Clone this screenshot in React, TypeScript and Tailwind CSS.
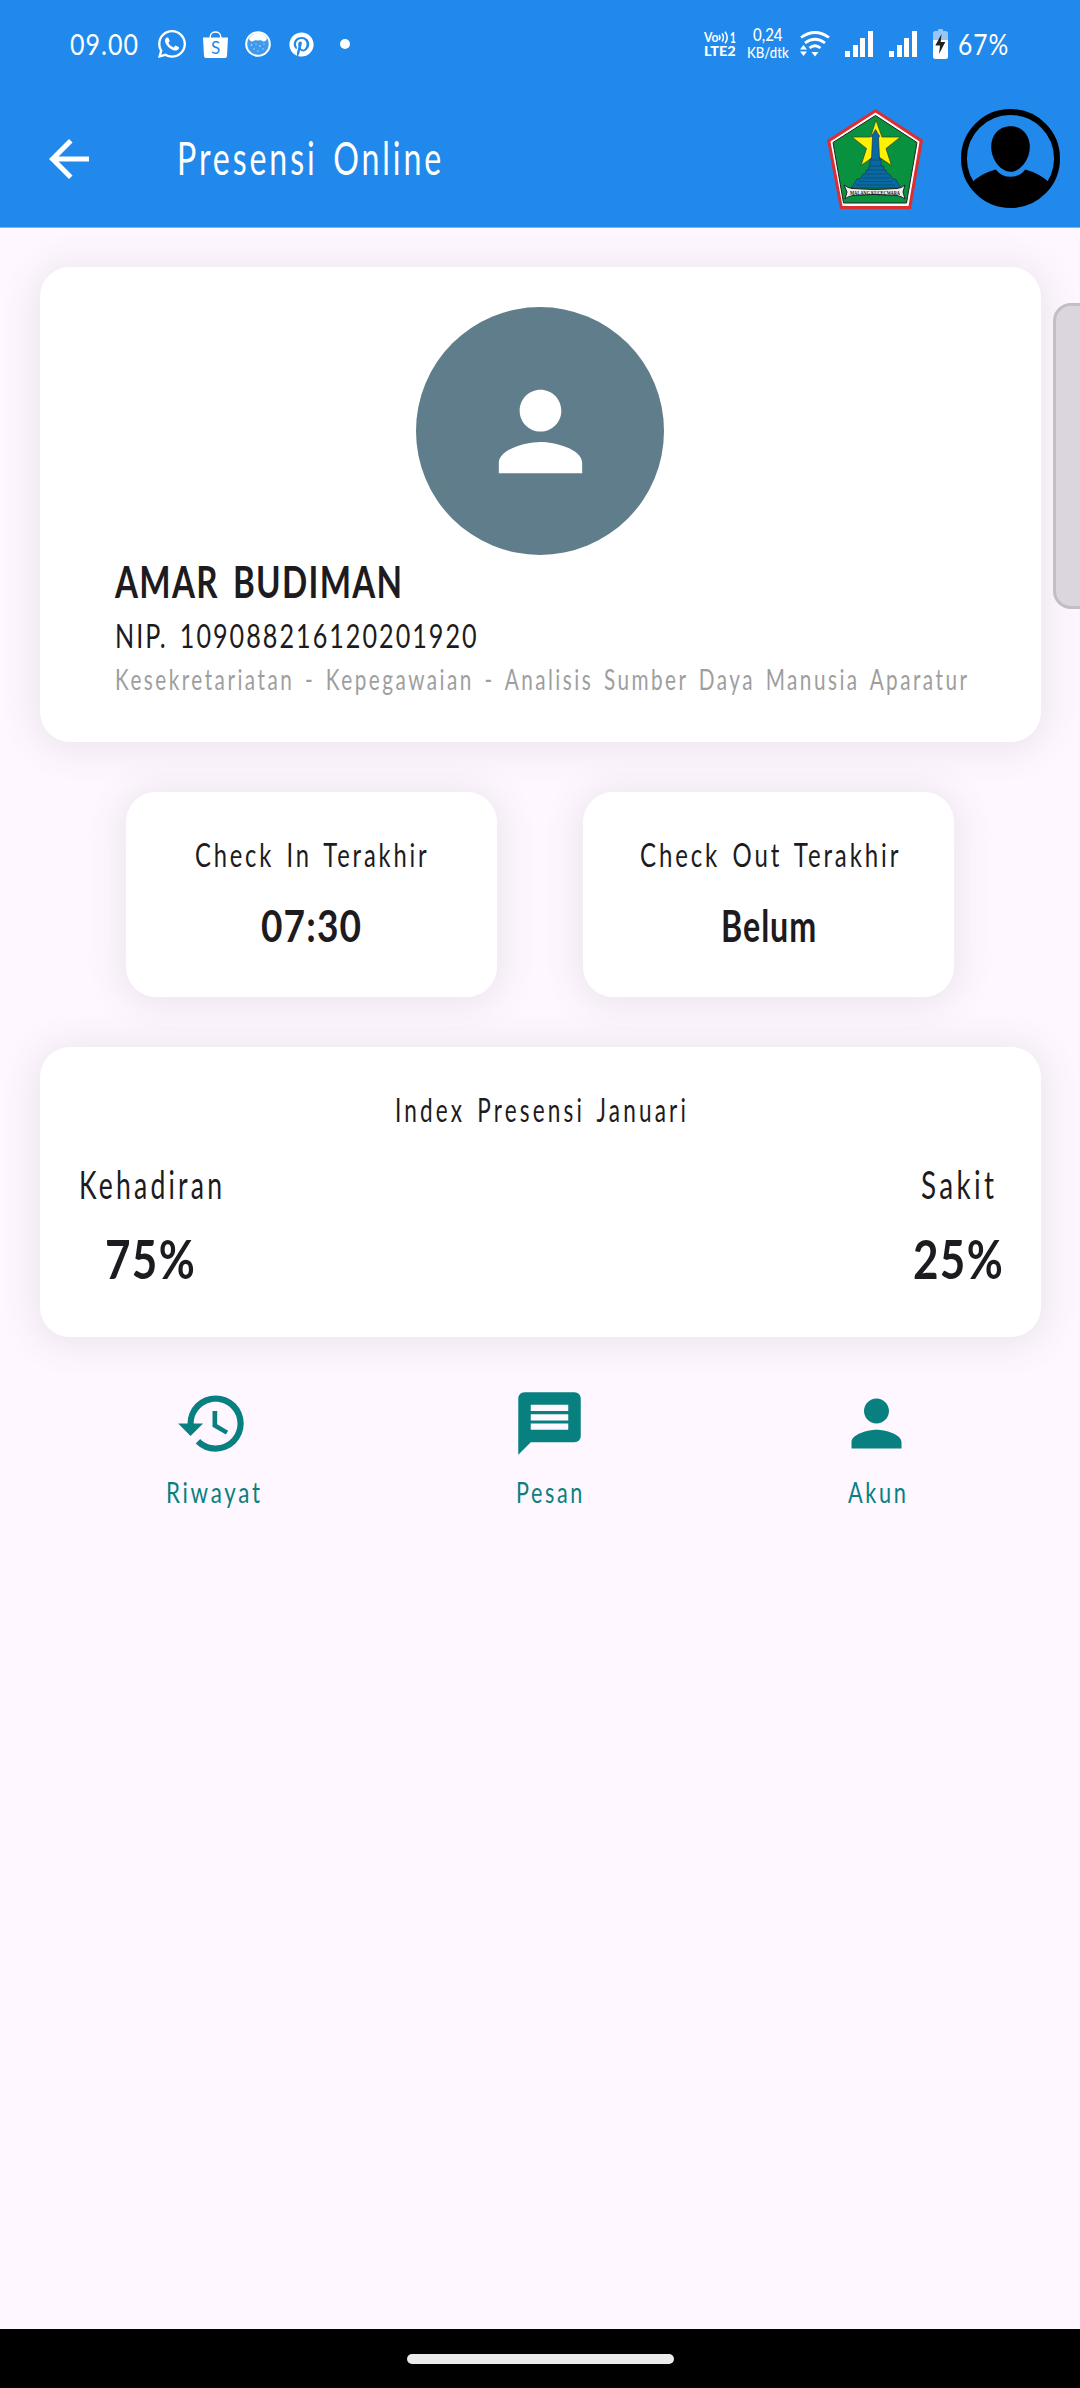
import { useLayoutEffect, useRef, useState } from 'react';
import { MdArrowBack, MdHistory, MdMessage, MdPerson } from 'react-icons/md';
import { FaWhatsapp, FaPinterest } from 'react-icons/fa';

// One line of condensed lettering, narrowed to the given width.
function Line({ text, width, className = '' }: { text: string; width: number; className?: string }) {
  const ref = useRef<HTMLSpanElement>(null);
  const [scale, setScale] = useState(0.7);
  useLayoutEffect(() => {
    const el = ref.current;
    if (!el) return;
    const trailing = parseFloat(getComputedStyle(el).letterSpacing) || 0;
    setScale(width / (el.offsetWidth - trailing));
  }, [text, width]);
  return (
    <span className={`block shrink-0 whitespace-nowrap [word-spacing:0.14em] ${className}`} style={{ width }}>
      <span ref={ref} className="inline-block origin-left" style={{ transform: `scaleX(${scale})` }}>
        {text}
      </span>
    </span>
  );
}

function SignalBars() {
  return (
    <div className="flex h-[26px] w-7 items-end justify-between">
      <div className="h-[6px] w-[5px] bg-white" />
      <div className="h-3 w-[5px] bg-white" />
      <div className="h-[19px] w-[5px] bg-white" />
      <div className="h-[26px] w-[5px] bg-white" />
    </div>
  );
}

function StatusBar() {
  return (
    <div className="flex h-[88px] items-center justify-between pr-[72px] pl-[70px] text-white">
      <div className="flex items-center">
        <Line text="09.00" width={68} className="text-[29px] leading-[40px] tracking-[0.04em]" />
        <FaWhatsapp className="ml-[18px] size-8" />
        <svg className="ml-[15px] h-[27px] w-[25px]" viewBox="0 0 25 27">
          <path d="M7.3 7V5.6C7.3 2.9 9.6 1 12.5 1s5.2 1.900 5.200 4.600V7" fill="none" stroke="#fff" strokeWidth="1.400" />
          <path d="M0 6.500h25l-1 18.500a2 2 0 0 1-2 2H3a2 2 0 0 1-2-2Z" fill="#fff" />
          <text x="12.500" y="22.500" textAnchor="middle" fontSize="17" fontFamily="Lato, sans-serif" fill="#2189eb">S</text>
        </svg>
        <svg className="ml-[17px] size-[26px]" viewBox="0 0 26 26">
          <circle cx="13" cy="13" r="11.800" fill="#4ba0ef" stroke="#fff" strokeWidth="2" />
          <circle cx="13" cy="13.500" r="9.800" fill="#3f99ee" />
          <path d="M4 7.500Q7 2 13 2t9 5.500q-1 3.500-4 3-1.200-2-5-1-3.800-1-5 1-3 .5-4-3Z" fill="#fff" />
          <g fill="#a5cff7">
            <circle cx="6.500" cy="14" r=".9" /><circle cx="11" cy="13" r=".7" /><circle cx="15" cy="15" r=".9" />
            <circle cx="19" cy="13" r=".7" /><circle cx="9" cy="18" r=".8" /><circle cx="13" cy="20" r=".8" /><circle cx="18" cy="18" r=".8" />
          </g>
        </svg>
        <FaPinterest className="ml-[18px] size-[25px]" />
        <div className="ml-[26px] size-[10px] rounded-full bg-white" />
      </div>

      <div className="flex items-center">
        <div className="flex w-8 flex-col">
          <div className="flex h-[13px] items-center">
            <Line text="Vo" width={14} className="text-[13px] leading-[13px] font-bold" />
            <svg className="h-[13px] w-[12px]" viewBox="0 0 12 13" fill="none" stroke="#fff" strokeWidth="1.500">
              <path d="M1 4q2 2.500 0 5M4 2.500q3 4 0 8M7 .7q4.500 5.800 0 11.600" />
            </svg>
            <Line text="1" width={6} className="text-[15px] leading-[13px] font-bold" />
          </div>
          <Line text="LTE2" width={32} className="text-[14px] leading-[14px] font-black" />
        </div>
        <div className="ml-[11px] flex w-[42px] flex-col items-center pb-px">
          <Line text="0,24" width={30} className="text-[16.500px] leading-[14px] font-medium" />
          <Line text="KB/dtk" width={42} className="mt-[3px] text-[16px] leading-[14px] font-medium" />
        </div>
        <svg className="ml-[11px] h-[26px] w-[30px]" viewBox="0 0 30 26" fill="none" stroke="#fff" strokeWidth="2.700">
          <path d="M1 6.500q14-10 28 0M5 12q10-7.500 20 0M9.500 17q5.500-4.500 11 0" />
          <path d="M11.500 21h7L15 25.500ZM0 18.500h7L3.500 14ZM0 20.500h7L3.500 25Z" fill="#fff" stroke="none" />
        </svg>
        <div className="ml-[15px]"><SignalBars /></div>
        <div className="ml-4"><SignalBars /></div>
        <svg className="ml-4 h-[30px] w-[15px]" viewBox="0 0 15 30">
          <path d="M2.500 2H5V.8q0-.8.8-.8h3.400q.8 0 .8.800V2h2.500Q15 2 15 4.500V11H0V4.500Q0 2 2.500 2Z" fill="#97c6f6" />
          <path d="M0 11h15v16.500q0 2.500-2.500 2.500h-10Q0 30 0 27.500Z" fill="#fff" />
          <path d="M8.500 5 2.300 16.500H7L6 25l6.300-12H7.700Z" fill="#222" />
        </svg>
        <Line text="67%" width={50} className="ml-[10px] text-[29px] leading-[40px] tracking-[0.04em]" />
      </div>
    </div>
  );
}

function CityCrest() {
  return (
    <svg className="h-[100px] w-[96px]" viewBox="0 0 96 100">
      <path d="M48.500 0 96 31 84 100H13L0 31Z" fill="#d92f31" />
      <path d="M48.500 3.500 92.500 32.500 81.500 97H15.500L3.500 32.500Z" fill="#fff" />
      <path d="M48.500 6.500 90 33.500 79.500 94H16.500L6 33.500Z" fill="#089240" stroke="#222" strokeWidth="1" />
      <path d="M49 11 55 28H73.500L59 39.500 64.500 56.500 49 46 34 56.500 39.500 39.500 25 28H43.500Z" fill="#fff200" stroke="#3b4a1b" strokeWidth=".8" />
      <path
        d="M48.500 20.500 50.500 24 52.500 27 51.500 29 52.500 50H54v7h2.500l.5 4h2l1.500 4h2l3 5h3l3 5 3 4H24l3-4 3-5h3l3-5h2l1.500-4h2l.5-4H43v-7h1.500L45.500 29 44.500 27 46.500 24Z"
        fill="#0869a3"
        stroke="#12384f"
        strokeWidth=".7"
      />
      <path d="M44 51h10M43 57h12M41 61h16M39 65h20M35 69h27M32 72.500h33M29 76h39" stroke="#11476a" strokeWidth=".8" />
      <path d="M17 76q4 3 8 3.500 23 2 45 0 5-.5 8-3.500l-2 7 2 7q-4-3-8-3.500-22-2-44 0-5 .5-8 3.500l2-7Z" fill="#eee" stroke="#222" strokeWidth="1" />
      <text x="48" y="86" textAnchor="middle" textLength="50" lengthAdjust="spacingAndGlyphs" fontSize="5.800" fontWeight="700" fontFamily="Liberation Serif, serif" fill="#111">MALANG KUÇEÇWARA</text>
    </svg>
  );
}

function ProfileBadge() {
  return (
    <svg className="size-[99px]" viewBox="0 0 100 100">
      <circle cx="50" cy="50" r="47" fill="none" stroke="#000" strokeWidth="6" />
      <path d="M50 17.500c12 0 19.500 9 19.500 21C69.500 51 60 63.500 50 63.500S30.500 51 30.500 38.500C30.500 26.500 38 17.500 50 17.500Z" />
      <path d="M10 75Q20 65 35 61q6 7.500 15 7.500T65 61q15 4 25 14-13 23-40 23T10 75Z" />
    </svg>
  );
}

function AppBar() {
  return (
    <div className="flex h-[139px] items-center pr-5 pl-[39px] text-white">
      <MdArrowBack className="mt-[2px] size-[60px]" />
      <Line text="Presensi Online" width={264} className="ml-[78px] text-[46px] leading-[60px] tracking-[0.09em]" />
      <div className="mt-[2px] ml-auto flex items-center gap-[38px] text-black">
        <CityCrest />
        <ProfileBadge />
      </div>
    </div>
  );
}

const card = 'rounded-[30px] bg-white shadow-[0_3px_36px_5px_rgba(85,85,80,0.11)]';

function CheckCard({ title, titleWidth, value, valueWidth }: { title: string; titleWidth: number; value: string; valueWidth: number }) {
  return (
    <div className={`flex h-[205px] w-[371px] flex-col items-center pt-[43px] ${card}`}>
      <Line text={title} width={titleWidth} className="text-[32px] leading-[40px] tracking-[0.12em]" />
      <Line text={value} width={valueWidth} className="mt-[20px] text-[44px] leading-[60px] font-bold tracking-[0.03em]" />
    </div>
  );
}

export default function App() {
  return (
    <div className="relative flex h-[2388px] w-[1080px] flex-col overflow-hidden bg-[#fef7ff] font-['Lato',sans-serif] text-[#1d1b20]">
      <header className="z-10 box-content h-[227px] shrink-0 border-b border-[#79b7f3] bg-[#2189eb]">
        <StatusBar />
        <AppBar />
      </header>

      <main className="flex flex-1 flex-col px-[39.5px] pt-[39px]">
        <section className={`h-[475px] px-[75px] pt-10 ${card}`}>
          <div className="mx-auto flex size-[248px] items-center justify-center rounded-full bg-[#607d8b] text-white">
            <MdPerson className="size-[125px]" />
          </div>
          <Line text="AMAR BUDIMAN" width={287} className="text-[44px] leading-[52px] font-bold tracking-[0.04em]" />
          <Line text="NIP. 109088216120201920" width={362} className="mt-[9px] text-[32px] leading-[40px] tracking-[0.08em]" />
          <Line text="Kesekretariatan - Kepegawaian - Analisis Sumber Daya Manusia Aparatur" width={852} className="mt-[5px] text-[28px] leading-[36px] tracking-[0.12em] text-[#9e9e9e]" />
        </section>

        <section className="mt-[50px] flex justify-evenly">
          <CheckCard title="Check In Terakhir" titleWidth={232} value="07:30" valueWidth={100} />
          <CheckCard title="Check Out Terakhir" titleWidth={258} value="Belum" valueWidth={95} />
        </section>

        <section className={`mt-[50px] flex h-[290px] flex-col pt-[43px] pr-[38px] pl-[39px] ${card}`}>
          <Line text="Index Presensi Januari" width={291} className="mx-auto text-[32px] leading-[40px] tracking-[0.14em]" />
          <div className="mt-[29px] flex justify-between">
            <div className="flex flex-col items-center">
              <Line text="Kehadiran" width={143} className="text-[38px] leading-[50px] tracking-[0.12em]" />
              <Line text="75%" width={90} className="mt-5 text-[53px] leading-[60px] font-bold tracking-[0.03em]" />
            </div>
            <div className="flex flex-col items-center">
              <Line text="Sakit" width={73} className="text-[38px] leading-[50px] tracking-[0.12em]" />
              <Line text="25%" width={90} className="mt-5 text-[53px] leading-[60px] font-bold tracking-[0.03em]" />
            </div>
          </div>
        </section>

        <nav className="mt-[49px] flex justify-between pr-[126.500px] pl-[126px] text-[#088080]">
          <div className="flex flex-col items-center">
            <MdHistory className="size-[75px]" />
            <Line text="Riwayat" width={94} className="mt-[12px] text-[28px] leading-[38px] tracking-[0.12em]" />
          </div>
          <div className="flex flex-col items-center">
            <MdMessage className="size-[75px]" />
            <Line text="Pesan" width={66} className="mt-[12px] text-[28px] leading-[38px] tracking-[0.12em]" />
          </div>
          <div className="flex flex-col items-center">
            <MdPerson className="size-[75px]" />
            <Line text="Akun" width={58} className="mt-[12px] text-[28px] leading-[38px] tracking-[0.12em]" />
          </div>
        </nav>
      </main>

      <footer className="flex h-[59px] shrink-0 items-center justify-center bg-black">
        <div className="h-[10px] w-[267px] rounded-full bg-[#ebebeb]" />
      </footer>

      <div className="absolute top-[303px] right-0 h-[306px] w-[27px] rounded-l-[18px] border-[3px] border-r-0 border-[#c3bdc5] bg-[#dbd6dd]" />
    </div>
  );
}
